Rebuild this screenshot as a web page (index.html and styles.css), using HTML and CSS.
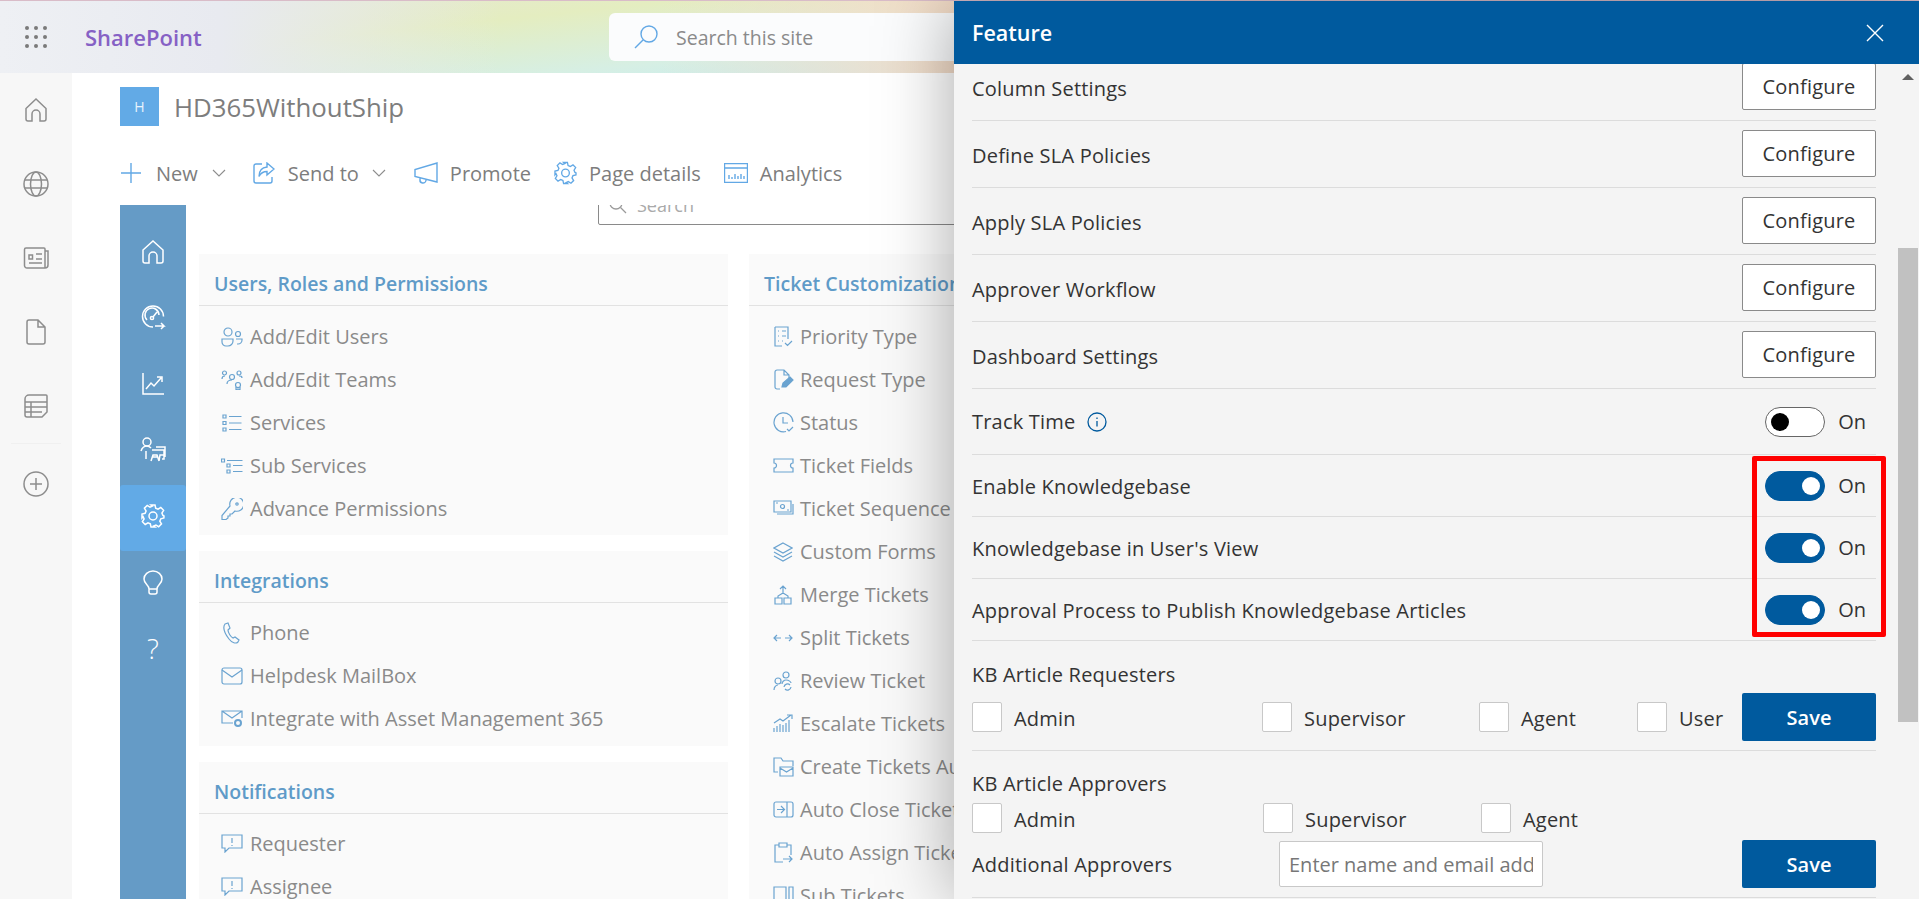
FILE: index.html
```html
<!DOCTYPE html>
<html lang="en">
<head>
  <meta charset="UTF-8">
  <title>Feature - HD365WithoutShip</title>
  <link rel="stylesheet" href="styles.css">
</head>
<body>
  <header class="topbar">
    <svg class="waffle" width="24" height="24" viewBox="0 0 24 24"><g fill="#7a7a7a"><circle cx="3" cy="3" r="2"/><circle cx="12" cy="3" r="2"/><circle cx="21" cy="3" r="2"/><circle cx="3" cy="12" r="2"/><circle cx="12" cy="12" r="2"/><circle cx="21" cy="12" r="2"/><circle cx="3" cy="21" r="2"/><circle cx="12" cy="21" r="2"/><circle cx="21" cy="21" r="2"/></g></svg>
    <span class="brand">SharePoint</span>
    <div class="site-search">
      <svg width="26" height="26" viewBox="0 0 26 26" fill="none" stroke="#62a8e5" stroke-width="1.4"><circle cx="16" cy="10" r="8"/><path d="M10 16L2 24"/></svg>
      <span>Search this site</span>
    </div>
  </header>

  <div class="shell">
    <nav class="app-rail">
      <a class="app-rail-item"><svg width="26" height="26" viewBox="0 0 26 26" class="gi"><path d="M3 11.500L13 2l10 9.500V22a2 2 0 0 1-2 2h-4v-7a4 4 0 0 0-8 0v7H5a2 2 0 0 1-2-2z"/></svg></a>
      <a class="app-rail-item"><svg width="26" height="26" viewBox="0 0 26 26" class="gi"><circle cx="13" cy="13" r="12"/><ellipse cx="13" cy="13" rx="5.500" ry="12"/><path d="M2 9h22M2 17h22"/></svg></a>
      <a class="app-rail-item"><svg width="26" height="22" viewBox="0 0 26 22" class="gi"><path d="M5 21h17a3 3 0 0 0 3-3V4h-3M1.500 2.500a1.500 1.500 0 0 1 1.500-1.500h18a1 1 0 0 1 1 1v19H4a2.500 2.500 0 0 1-2.500-2.500z"/><path d="M6 8h3.500v4H6zM13 7h6M13 12h6M6 16h13"/></svg></a>
      <a class="app-rail-item"><svg width="20" height="26" viewBox="0 0 20 26" class="gi"><path d="M3 1h9l7 7v15a2 2 0 0 1-2 2H3a2 2 0 0 1-2-2V3a2 2 0 0 1 2-2zM12 1v7h7"/></svg></a>
      <a class="app-rail-item"><svg width="24" height="24" viewBox="0 0 24 24" class="gi"><path d="M5 1h17a1 1 0 0 1 1 1v16l-5 5H3a2 2 0 0 1-2-2V5a4 4 0 0 1 4-4zM1 8h22M1 13h22M1 18h17M7 8v15"/></svg></a>
      <div class="rail-sep"></div>
      <a class="app-rail-item rail-add"><svg width="26" height="26" viewBox="0 0 26 26" class="gi"><circle cx="13" cy="13" r="12"/><path d="M13 7v12M7 13h12"/></svg></a>
    </nav>

    <main class="page">
      <div class="site-head">
        <div class="site-logo">H</div>
        <h1>HD365WithoutShip</h1>
      </div>

      <div class="cmdbar">
        <span class="cmd cmd-new"><svg width="20" height="20" viewBox="0 0 20 20" class="bi"><path d="M10 0v20M0 10h20"/></svg>New<svg class="chev" width="14" height="8" viewBox="0 0 14 8"><path d="M1 1l6 6 6-6"/></svg></span>
        <span class="cmd cmd-send"><svg width="22" height="22" viewBox="0 0 22 22" class="bi"><path d="M9 2H3a2 2 0 0 0-2 2v15a2 2 0 0 0 2 2h14a2 2 0 0 0 2-2v-4"/><path d="M14 1l7 6-7 6V9.500c-4 0-6 1-8 5 0-6 3-9 8-9.500z"/></svg>Send to<svg class="chev" width="14" height="8" viewBox="0 0 14 8"><path d="M1 1l6 6 6-6"/></svg></span>
        <span class="cmd cmd-promote"><svg width="24" height="22" viewBox="0 0 24 22" class="bi"><path d="M23 1v19L1 14.500V7.500zM6 16v1.500a3 3 0 0 0 6 1V18"/></svg>Promote</span>
        <span class="cmd cmd-page"><svg width="23" height="24" viewBox="0 0 24 24" class="bi"><circle cx="12" cy="12" r="4"/><path d="M10 1h4l.7 3.200 2.300 1 2.800-1.700 2.800 2.800-1.700 2.800 1 2.300L23 12l-.100 2-3.100.8-1 2.300 1.700 2.800-2.800 2.800-2.800-1.700-2.200 1L14 23h-4l-.7-3.200-2.300-1-2.800 1.700-2.800-2.800 1.700-2.800-1-2.200L1 14v-4l3.100-.7 1-2.300-1.700-2.800 2.800-2.800 2.800 1.700 2.300-1z"/></svg>Page details</span>
        <span class="cmd cmd-page"><svg width="24" height="20" viewBox="0 0 24 20" class="bi"><path d="M.5.500h23v19H.5zM.5 5h23"/><path d="M5 16v-4M8 16v-2M11 16v-5M14 16v-3M17 16v-5M20 16v-3"/></svg>Analytics</span>
      </div>

      <div class="admin">
        <aside class="admin-rail">
          <a class="admin-link"><svg width="22" height="24" viewBox="0 0 22 24" class="wi"><path d="M1 10L11 1l10 9v11a2 2 0 0 1-2 2h-4v-7a4 4 0 0 0-8 0v7H3a2 2 0 0 1-2-2z"/></svg></a>
          <a class="admin-link"><svg width="26" height="26" viewBox="0 0 26 26" class="wi"><path d="M13 22A10.500 10.500 0 1 1 23.500 11.500"/><path d="M7 15a7 7 0 1 1 12-5M13 12l4-5M15 21h9l-3-3M24 21l-3 3"/><circle cx="12" cy="13" r="1.600"/></svg></a>
          <a class="admin-link"><svg width="22" height="22" viewBox="0 0 22 22" class="wi"><path d="M1 0v21h21M4 16l5-6 3 3 7-8M15 4h5v5"/></svg></a>
          <a class="admin-link"><svg width="26" height="26" viewBox="0 0 26 26" class="wi"><circle cx="7" cy="5" r="4"/><path d="M1 14c1-3 3-5 6-5 2 0 3 1 4 2M6 14v8M12 13h12v9h-2M16 10h9v10M11 24l2-6h4l2 6M13 20h4M19 24l1-6h4"/></svg></a>
          <a class="admin-link active"><svg width="24" height="24" viewBox="0 0 24 24" class="wi"><circle cx="12" cy="12" r="4"/><path d="M10 1h4l.7 3.200 2.300 1 2.800-1.700 2.800 2.800-1.700 2.800 1 2.300L23 12l-.100 2-3.100.8-1 2.300 1.700 2.800-2.800 2.800-2.800-1.700-2.200 1L14 23h-4l-.7-3.200-2.300-1-2.800 1.700-2.800-2.800 1.700-2.800-1-2.200L1 14v-4l3.100-.7 1-2.300-1.700-2.800 2.800-2.800 2.800 1.700 2.300-1z"/></svg></a>
          <a class="admin-link"><svg width="20" height="25" viewBox="0 0 20 25" class="wi"><path d="M6 19c0-4-5-5-5-10a9 8 0 0 1 18 0c0 5-5 6-5 10zM6 19v3a2 2 0 0 0 2 2h4a2 2 0 0 0 2-2v-3"/></svg></a>
          <a class="admin-link help">?</a>
        </aside>

        <div class="admin-body">
          <div class="list-search">
            <svg width="18" height="18" viewBox="0 0 18 18" fill="none" stroke="#9a9a9a" stroke-width="1.300"><circle cx="7" cy="7" r="6"/><path d="M11.500 11.500L17 17"/></svg>
            <span>Search</span>
          </div>

          <div class="cards">
            <div class="card-col">
              <section class="card">
                <h2>Users, Roles and Permissions</h2>
                <ul>
                  <li><svg width="22" height="20" viewBox="0 0 22 20" class="li"><circle cx="7" cy="5" r="4"/><circle cx="17" cy="7" r="2.500"/><path d="M1 12h11v2a5 5 0 0 1-5 5H5a4 4 0 0 1-4-4zM15 12h6v1a4 4 0 0 1-4 4h-1"/></svg>Add/Edit Users</li>
                  <li><svg width="22" height="20" viewBox="0 0 22 20" class="li"><circle cx="3.500" cy="3" r="2"/><circle cx="18" cy="3" r="2"/><circle cx="11" cy="7" r="2.500"/><circle cx="17" cy="15" r="2.500"/><path d="M1 9c0-2 1-3 3-3M21 8c0-2-1-2-3-2M6 14c0-3 2-4 5-4M15 17v3l2-1 2 1v-3"/></svg>Add/Edit Teams</li>
                  <li><svg width="20" height="18" viewBox="0 0 20 18" class="li"><path d="M1 1h3v3H1zM1 7.500h3v3H1zM1 14h3v3H1zM7 2.500h12.500M7 9h12.500M7 15.500h12.500"/></svg>Services</li>
                  <li><svg width="22" height="16" viewBox="0 0 22 16" class="li"><path d="M.5 1h3v3h-3zM6 6h3v3H6zM6 12h3v3H6zM6 2.500h15.500M12 7.500h9.500M12 13.500h9.500"/></svg>Sub Services</li>
                  <li><svg width="22" height="22" viewBox="0 0 22 22" class="li"><path d="M9 8a7 7 0 1 1 5 5l-3 3H9v2H7v2l-2 1.500H1v-4z"/><circle cx="16" cy="6" r="1.200"/></svg>Advance Permissions</li>
                </ul>
              </section>
              <section class="card">
                <h2>Integrations</h2>
                <ul>
                  <li><svg width="18" height="22" viewBox="0 0 18 22" class="li"><path d="M2 2l3-1 2 5-2 2c0 3 3 7 5 8l2-1 4 3-1 2c-2 2-6 1-9-3S-1 6 2 2z"/></svg>Phone</li>
                  <li><svg width="22" height="18" viewBox="0 0 22 18" class="li"><rect x="1" y="1" width="20" height="16" rx="2"/><path d="M1 3l10 7 10-7"/></svg>Helpdesk MailBox</li>
                  <li><svg width="22" height="18" viewBox="0 0 22 18" class="li"><path d="M12 13H1V1h20v7M1 1l10 7 10-7"/><circle cx="17" cy="13" r="3" stroke-width="2"/></svg>Integrate with Asset Management 365</li>
                </ul>
              </section>
              <section class="card">
                <h2>Notifications</h2>
                <ul>
                  <li><svg width="22" height="19" viewBox="0 0 22 19" class="li"><path d="M1 1h20v13H8l-4 4v-4H1zM11 4v5M11 11v1"/></svg>Requester</li>
                  <li><svg width="22" height="19" viewBox="0 0 22 19" class="li"><path d="M1 1h20v13H8l-4 4v-4H1zM11 4v5M11 11v1"/></svg>Assignee</li>
                </ul>
              </section>
            </div>

            <div class="card-col card-col-wide">
              <section class="card">
                <h2>Ticket Customization</h2>
                <ul>
                  <li><svg width="22" height="21" viewBox="0 0 22 21" class="li"><path d="M3 1h13v12M10 20H3V1M6 5h1M10 5h4M6 10h1M10 10h4M6 15h1M10 15h1M13 17l2.500 2.500L20 15"/></svg>Priority Type</li>
                  <li><svg width="22" height="21" viewBox="0 0 22 21" class="li"><path d="M8 20H5a2 2 0 0 1-2-2V3a2 2 0 0 1 2-2h7l5 5v3M12 1v5h5"/><path class="fill" d="M10 18l1-4 7-6 3 3-7 7z"/></svg>Request Type</li>
                  <li><svg width="21" height="21" viewBox="0 0 21 21" class="li"><path d="M13 19.500A9.500 9.500 0 1 1 20 10M10 5v6h5M14 17l2 2 4-4"/></svg>Status</li>
                  <li><svg width="21" height="15" viewBox="0 0 21 15" class="li"><path d="M1 1h19v4a2.500 2.500 0 0 0 0 5v4H1v-4a2.500 2.500 0 0 0 0-5z"/></svg>Ticket Fields</li>
                  <li><svg width="21" height="17" viewBox="0 0 21 17" class="li"><path d="M1 1h17v11H1zM20 4v10H4"/><circle cx="9.500" cy="6.500" r="2"/><path d="M3 3h2M14 10h2"/></svg>Ticket Sequence</li>
                  <li><svg width="20" height="20" viewBox="0 0 20 20" class="li"><path d="M10 1l9 5-9 5-9-5zM1 10l9 5 9-5M1 14l9 5 9-5"/></svg>Custom Forms</li>
                  <li><svg width="20" height="20" viewBox="0 0 20 20" class="li"><path d="M2 13h7v6H2zM11 13h7v6h-7zM10 1v8M7 4l3-3 3 3M5 13v-2l5-3 5 3v2"/></svg>Merge Tickets</li>
                  <li><svg width="20" height="8" viewBox="0 0 20 8" class="li"><path d="M1 4h7M4 1L1 4l3 3M12 4h7M16 1l3 3-3 3"/></svg>Split Tickets</li>
                  <li><svg width="20" height="20" viewBox="0 0 20 20" class="li"><circle cx="13" cy="4" r="3"/><circle cx="5" cy="10" r="3"/><path d="M1 19c0-3 2-5 4-5M9 13c0-2 2-4 4-4 3 0 5 2 5 3M11 16a3.500 3.500 0 0 1 6-2M18 16a3.500 3.500 0 0 1-6 2"/></svg>Review Ticket</li>
                  <li><svg width="20" height="19" viewBox="0 0 20 19" class="li"><path d="M1 18v-4M4 18v-6M7 18V10M10 18V11M13 18V9M16 18V6M1 9l6-4 3 2 8-6M14 1h5v4"/></svg>Escalate Tickets</li>
                  <li><svg width="21" height="20" viewBox="0 0 21 20" class="li"><path d="M5 15H1V1h7l2 3h10v5M7 10h13v9H7zM7 11l6.500 4 6.500-4"/></svg>Create Tickets Automatically</li>
                  <li><svg width="21" height="17" viewBox="0 0 21 17" class="li"><rect x="1" y="1" width="19" height="15" rx="2"/><path d="M14 1v15M4 8.500h7M8 5l3.500 3.500L8 12"/></svg>Auto Close Tickets</li>
                  <li><svg width="20" height="21" viewBox="0 0 20 21" class="li"><path d="M6 3H2v17h8M14 3h4v10M6 1h8v4H6zM10 17h9M16 14l3 3-3 3"/></svg>Auto Assign Tickets</li>
                  <li><svg width="21" height="20" viewBox="0 0 21 20" class="li"><path d="M1 1h12v18H1zM16 1h4v18h-4z"/></svg>Sub Tickets</li>
                </ul>
              </section>
            </div>
          </div>
        </div>
      </div>
    </main>
  </div>

  <!-- settings panel slides over the page -->
  <aside class="panel">
    <div class="panel-head">
      <span>Feature</span>
      <svg width="18" height="18" viewBox="0 0 18 18" fill="none" stroke="#fff" stroke-width="1.400"><path d="M1 1l16 16M17 1L1 17"/></svg>
    </div>
    <div class="panel-main">
      <div class="panel-body">
        <div class="row"><label>Column Settings</label><button class="btn">Configure</button></div>
        <div class="row"><label>Define SLA Policies</label><button class="btn">Configure</button></div>
        <div class="row"><label>Apply SLA Policies</label><button class="btn">Configure</button></div>
        <div class="row"><label>Approver Workflow</label><button class="btn">Configure</button></div>
        <div class="row"><label>Dashboard Settings</label><button class="btn">Configure</button></div>
        <div class="row row-track">
          <label>Track Time <svg class="info" width="20" height="20" viewBox="0 0 20 20" fill="none" stroke="#005a9e" stroke-width="1.300"><circle cx="10" cy="10" r="9"/><path d="M10 9v5.500M10 5.500v1.500"/></svg></label>
          <div class="switch-wrap"><span class="switch"></span><span class="switch-text">On</span></div>
        </div>
        <div class="row row-toggle">
          <label>Enable Knowledgebase</label>
          <div class="switch-wrap"><span class="switch on"></span><span class="switch-text">On</span></div>
        </div>
        <div class="row row-toggle">
          <label>Knowledgebase in User's View</label>
          <div class="switch-wrap"><span class="switch on"></span><span class="switch-text">On</span></div>
        </div>
        <div class="row row-toggle">
          <label>Approval Process to Publish Knowledgebase Articles</label>
          <div class="switch-wrap"><span class="switch on"></span><span class="switch-text">On</span></div>
        </div>

        <div class="kb kb-req">
          <div class="kb-title">KB Article Requesters</div>
          <div class="check-row">
            <span class="check c-admin"><i></i><b>Admin</b></span>
            <span class="check c-super"><i></i><b>Supervisor</b></span>
            <span class="check c-agent"><i></i><b>Agent</b></span>
            <span class="check"><i></i><b>User</b></span>
            <button class="btn btn-save">Save</button>
          </div>
        </div>

        <div class="kb kb-app">
          <div class="kb-title">KB Article Approvers</div>
          <div class="check-row short">
            <span class="check c-admin2"><i></i><b>Admin</b></span>
            <span class="check c-super2"><i></i><b>Supervisor</b></span>
            <span class="check"><i></i><b>Agent</b></span>
          </div>
          <div class="extra-row">
            <label>Additional Approvers</label>
            <input type="text" placeholder="Enter name and email address">
            <button class="btn btn-save">Save</button>
          </div>
        </div>
      </div>
      <div class="scrollbar">
        <span class="scroll-up"></span>
        <span class="scroll-thumb"></span>
      </div>
    </div>
  </aside>
  <div class="highlight"></div>
</body>
</html>
```

FILE: styles.css
```css
* {
  margin: 0;
  padding: 0;
  box-sizing: border-box;
}
html, body {
  height: 899px;
  overflow: hidden;
}
body {
  font-family: 'Open Sans', 'Noto Sans', sans-serif;
  background: #fff;
  color: #333;
}

/* top suite bar */
.topbar {
  height: 73px;
  display: flex;
  align-items: center;
  border-top: 1px solid #d9bcc8;
  background:
    linear-gradient(90deg, #eef0f4 0, #e8eaf0 219px, rgba(232,234,240,0) 500px),
    linear-gradient(90deg, rgba(246,220,200,0) 660px, #f4dcc8 960px),
    linear-gradient(174deg, #e6e6da 0, #e4edc0 26%, #d6efe4 48%, #c6ecf0 62%, #dcdcf8 86%, #cfcff0 100%);
}
.waffle {
  margin: 0 0 0 24px;
}
.brand {
  width: 130px;
  margin-left: 37px;
  font-size: 22px;
  font-weight: 600;
  color: #8661c5;
}
.site-search {
  margin-left: 394px;
  width: 420px;
  height: 48px;
  display: flex;
  align-items: center;
  gap: 17px;
  padding-left: 24px;
  background: #fbfcfd;
  border-radius: 6px;
  font-size: 19.5px;
  color: #8a8a8a;
}

.shell {
  display: flex;
  height: 826px;
}

/* left app bar */
.app-rail {
  width: 72px;
  flex: none;
  background: #f7f7f7;
}
.app-rail-item {
  height: 74px;
  display: flex;
  align-items: center;
  justify-content: center;
}
.rail-sep {
  width: 50px;
  margin: 0 auto;
  border-top: 1px solid #f0f0f0;
}
.rail-add {
  height: 80px;
}
.gi {
  fill: none;
  stroke: #8d8d8d;
  stroke-width: 1.5;
}

.page {
  flex: 1;
  min-width: 0;
  padding-left: 48px;
  display: flex;
  flex-direction: column;
}
.site-head {
  display: flex;
  align-items: center;
  gap: 15px;
  margin-top: 14px;
  height: 39px;
}
.site-logo {
  width: 39px;
  height: 39px;
  background: #62aae6;
  color: #e8f3fc;
  font-size: 14px;
  display: flex;
  align-items: center;
  justify-content: center;
}
h1 {
  font-size: 25.8px;
  font-weight: 400;
  color: #7d7d7d;
}

.cmdbar {
  height: 40px;
  margin-top: 27px;
  display: flex;
  align-items: center;
  gap: 24px;
}
.cmd {
  display: flex;
  align-items: center;
  gap: 12px;
  font-size: 20px;
  color: #7d7d7d;
  white-space: nowrap;
}
.cmd-new {
  margin-left: 1px;
  gap: 15px;
}
.cmd-new .chev {
  margin-left: -1px;
}
.cmd-send {
  margin-left: 3px;
  gap: 13px;
}
.cmd-promote {
  margin-left: 4px;
}
.cmd-page {
  margin-left: -1px;
}
.bi {
  fill: none;
  stroke: #62a8e5;
  stroke-width: 1.4;
}
.chev {
  fill: none;
  stroke: #8d8d8d;
  stroke-width: 1.1;
}

/* admin app embedded in the page */
.admin {
  display: flex;
  margin-top: 12px;
  flex: 1;
  min-height: 0;
}
.admin-rail {
  width: 66px;
  flex: none;
  padding-top: 16px;
  background: #659bc6;
}
.admin-link {
  height: 66px;
  padding-bottom: 4px;
  display: flex;
  align-items: center;
  justify-content: center;
}
.admin-link.active {
  background: #62aae6;
  border-radius: 3px;
}
.admin-link.help {
  font-size: 28px;
  font-weight: 300;
  color: #fff;
}
.wi {
  fill: none;
  stroke: #fff;
  stroke-width: 1.5;
}

.admin-body {
  flex: 1;
  min-width: 0;
  padding-left: 13px;
  overflow: hidden;
}
.list-search {
  height: 40px;
  margin: -20px 0 0 399px;
  width: 600px;
  display: flex;
  align-items: center;
  gap: 10px;
  padding-left: 10px;
  border: 1px solid #8a8a8a;
  border-radius: 2px;
  font-size: 18px;
  color: #aaa;
}
.cards {
  display: flex;
  gap: 21px;
  margin-top: 29px;
}
.card-col {
  width: 529px;
  flex: none;
  display: flex;
  flex-direction: column;
  gap: 16px;
}
.card {
  background: #fafafa;
}
.card h2 {
  height: 52px;
  line-height: 60px;
  padding-left: 15px;
  font-size: 19.5px;
  font-weight: 600;
  color: #5f9bc8;
  border-bottom: 1px solid #e2e2e2;
  white-space: nowrap;
  overflow: hidden;
}
.card ul {
  list-style: none;
  padding: 9px 0 5px;
}
.card + .card ul {
  padding: 8px 0 6px;
}
.card li {
  height: 43px;
  display: grid;
  grid-template-columns: 22px 1fr;
  column-gap: 7px;
  align-items: center;
  padding-left: 22px;
  font-size: 20px;
  color: #8a8a8a;
  white-space: nowrap;
}
.card-col-wide li {
  padding-left: 23px;
  column-gap: 6px;
}
.card li svg {
  justify-self: center;
}
.li {
  fill: none;
  stroke: #6aa3d0;
  stroke-width: 1.2;
}
.li .fill {
  fill: #6aa3d0;
}

/* feature panel */
.panel {
  position: absolute;
  top: 1px;
  left: 954px;
  right: 0;
  bottom: 0;
  display: flex;
  flex-direction: column;
  background: #f4f4f4;
  box-shadow: 0 0 70px rgba(0,0,0,0.35);
}
.panel-head {
  height: 63px;
  flex: none;
  display: flex;
  align-items: center;
  justify-content: space-between;
  padding: 0 35px 0 18px;
  background: #005a9e;
  color: #fff;
  font-size: 21.5px;
  font-weight: 600;
  position: relative;
  z-index: 1;
}
.panel-main {
  flex: 1;
  min-height: 0;
  display: flex;
  overflow: hidden;
}
.panel-body {
  flex: 1;
  min-width: 0;
  margin-top: -10px;
  padding: 0 21px 0 18px;
}
.row {
  height: 67px;
  display: flex;
  align-items: center;
  justify-content: space-between;
  border-bottom: 1px solid #dcdcdc;
}
.row-track {
  height: 66px;
}
.row-toggle {
  height: 62px;
}
.row label, .kb-title, .extra-row label {
  font-size: 20px;
  letter-spacing: 0.2px;
  color: #333;
  display: flex;
  align-items: center;
  gap: 4px;
}
.row label {
  padding-top: 2px;
}
.row-track label {
  padding-top: 0;
}
.row .btn {
  margin-bottom: 2px;
}
.btn {
  width: 134px;
  height: 47px;
  background: #fff;
  border: 1px solid #8a8a8a;
  border-radius: 2px;
  font: 500 20px 'Open Sans', sans-serif;
  letter-spacing: 0.2px;
  color: #333;
}
.btn-save {
  height: 48px;
  margin-left: auto;
  background: #005a9e;
  border: none;
  font-weight: 600;
  letter-spacing: 0;
  color: #fff;
}
.info {
  margin-left: 8px;
}
.switch-wrap {
  display: flex;
  align-items: center;
  gap: 13px;
  margin-right: 10px;
}
.switch {
  width: 60px;
  height: 30px;
  border: 1px solid #666;
  border-radius: 15px;
  background: #fff;
  position: relative;
}
.switch::after {
  content: "";
  position: absolute;
  top: 5px;
  left: 5px;
  width: 18px;
  height: 18px;
  border-radius: 50%;
  background: #000;
}
.switch.on {
  background: #005a9e;
  border-color: #005a9e;
}
.switch.on::after {
  left: 36px;
  background: #fff;
}
.switch-text {
  font-size: 20px;
  color: #333;
}

.kb {
  border-bottom: 1px solid #dcdcdc;
}
.kb-req {
  height: 110px;
  padding-top: 21px;
}
.kb-app {
  height: 147px;
  padding-top: 20px;
}
.kb-title {
  height: 24px;
}
.check-row {
  display: flex;
  align-items: center;
  height: 48px;
  margin-top: 7px;
}
.check-row.short {
  height: 30px;
  margin-top: 8px;
}
.check {
  display: flex;
  align-items: center;
  gap: 12px;
}
.check b {
  padding-top: 2px;
  font-size: 20px;
  font-weight: 400;
  letter-spacing: 0.2px;
  color: #333;
}
.check i {
  width: 30px;
  height: 30px;
  background: #fff;
  border: 1px solid #c8c8c8;
  border-radius: 2px;
}
.c-admin { width: 290px; }
.c-super { width: 217px; }
.c-agent { width: 158px; }
.c-admin2 { width: 291px; }
.c-super2 { width: 218px; }
.extra-row {
  display: flex;
  align-items: center;
  margin-top: 7px;
}
.extra-row label {
  width: 307px;
}
.extra-row input {
  width: 264px;
  height: 46px;
  padding: 0 9px;
  background: #fff;
  border: 1px solid #c8c8c8;
  border-radius: 2px;
  font: 20px 'Open Sans', sans-serif;
}
.extra-row input::placeholder {
  color: #777;
}

.scrollbar {
  width: 22px;
  flex: none;
  position: relative;
}
.scroll-up {
  position: absolute;
  top: 10px;
  left: 5px;
  border: 6px solid transparent;
  border-top: 0;
  border-bottom: 6px solid #606060;
}
.scroll-thumb {
  position: absolute;
  top: 184px;
  left: 1px;
  right: 1px;
  height: 474px;
  background: #c1c1c1;
}

/* red marker drawn on the screenshot */
.highlight {
  position: absolute;
  left: 1752px;
  top: 456px;
  width: 134px;
  height: 181px;
  border: 5px solid #f00;
  border-radius: 2px;
}
```
